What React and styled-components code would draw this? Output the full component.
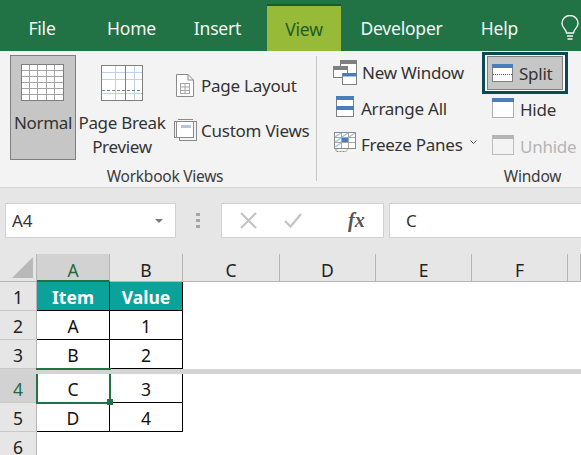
import React from "react";
import styled, { createGlobalStyle } from "styled-components";

const GlobalStyle = createGlobalStyle`
  html, body {
    margin: 0;
    padding: 0;
    background: #fff;
  }
  body {
    font-family: "Noto Sans", "Open Sans", sans-serif;
    overflow: hidden;
  }
`;

const Page = styled.div`
  width: 581px;
  height: 455px;
  overflow: hidden;
  display: flex;
  flex-direction: column;
`;

/* Tabs */
const TabBar = styled.div`
  height: 51px;
  flex: none;
  background: #217346;
  position: relative;
  display: flex;
  align-items: flex-end;
`;
const Tab = styled.div`
  width: ${(p) => p.$w}px;
  margin-right: ${(p) => p.$mr || 0}px;
  height: ${(p) => (p.$active ? 47 : 51)}px;
  box-sizing: border-box;
  display: flex;
  align-items: center;
  justify-content: center;
  padding-top: ${(p) => (p.$active ? 0 : 4)}px;
  font-size: 17.5px;
  letter-spacing: -0.2px;
  color: ${(p) => (p.$active ? "#1f5c2a" : "#f3f7f4")};
  background: ${(p) => (p.$active ? "#97ba38" : "transparent")};
  border-top: ${(p) => (p.$active ? "2px solid #155a30" : "none")};
`;
const BulbBox = styled.div`
  position: absolute;
  left: 561px;
  top: 15px;
`;

/* Ribbon */
const Ribbon = styled.div`
  height: 137px;
  flex: none;
  box-sizing: border-box;
  background: #f3f3f3;
  border-bottom: 1px solid #d6d6d6;
  display: flex;
`;
const Group = styled.div`
  width: ${(p) => p.$w}px;
  flex: none;
  box-sizing: border-box;
  display: flex;
  flex-direction: column;
  align-items: stretch;
`;
const GroupBody = styled.div`
  height: 115px;
  display: flex;
  padding: ${(p) => p.$pad};
  box-sizing: border-box;
`;
const GroupLabel = styled.div`
  text-align: center;
  font-size: 15.5px;
  letter-spacing: -0.25px;
  line-height: 20px;
  color: #3c3c3c;
  padding-left: ${(p) => p.$pl || 0}px;
`;
const Separator = styled.div`
  width: 1px;
  flex: none;
  margin: 5px 0 6px;
  background: #c6c6c6;
`;
const LargeButton = styled.div`
  width: ${(p) => p.$w}px;
  height: 105px;
  margin: 0 ${(p) => p.$mr || 0}px 0 ${(p) => p.$ml || 0}px;
  box-sizing: border-box;
  flex: none;
  display: flex;
  flex-direction: column;
  align-items: center;
  padding-top: ${(p) => p.$pt}px;
  font-size: 17px;
  letter-spacing: -0.3px;
  line-height: 24px;
  text-align: center;
  white-space: nowrap;
  color: #333;
  background: ${(p) => (p.$active ? "#c6c6c6" : "transparent")};
  border: 1px solid ${(p) => (p.$active ? "#7f7f7f" : "transparent")};
  svg {
    display: block;
    margin-bottom: ${(p) => p.$gap}px;
  }
`;
const SmallColumn = styled.div`
  width: ${(p) => p.$w}px;
  flex: none;
  display: flex;
  flex-direction: column;
  gap: ${(p) => p.$gap}px;
  padding-top: ${(p) => p.$pt}px;
`;
const SmallButton = styled.div`
  display: flex;
  align-items: center;
  gap: ${(p) => p.$gap || 7}px;
  height: ${(p) => p.$h || 26}px;
  padding-left: ${(p) => p.$pl || 0}px;
  padding-top: ${(p) => p.$textDown || 0}px;
  font-size: 17px;
  letter-spacing: -0.25px;
  white-space: nowrap;
  color: ${(p) => (p.$disabled ? "#b5b5b5" : "#333")};
  svg {
    flex: none;
    display: block;
    margin-bottom: ${(p) => (p.$iconUp || 0) * 2}px;
  }
`;
const SplitButton = styled.div`
  width: 86px;
  height: 42px;
  margin: -7px 0 -12px -10px;
  box-sizing: border-box;
  border: 3px solid #0b4a54;
  display: flex;
  padding: 1px 2px;
  background: #fff;
`;
const SplitInner = styled.div`
  flex: 1;
  display: flex;
  align-items: center;
  gap: 6px;
  padding-left: 4px;
  background: #c6c6c6;
  border: 1px solid #7f7f7f;
  font-size: 17px;
  letter-spacing: -0.25px;
  color: #333;
  svg {
    display: block;
  }
`;
const Chevron = styled.span`
  margin-left: 2px;
  display: inline-flex;
`;

/* Formula bar */
const FormulaBar = styled.div`
  height: 66px;
  flex: none;
  box-sizing: border-box;
  background: #e6e6e6;
  padding: 15px 0 0 5px;
  display: flex;
  align-items: flex-start;
`;
const NameBox = styled.div`
  width: 171px;
  height: 35px;
  box-sizing: border-box;
  background: #fff;
  border: 1px solid #d2d2d2;
  display: flex;
  align-items: center;
  justify-content: space-between;
  padding: 0 12px 0 6px;
  font-size: 17px;
  color: #333;
`;
const Caret = styled.span`
  width: 0;
  height: 0;
  border-left: 4px solid transparent;
  border-right: 4px solid transparent;
  border-top: 4px solid #7a7a7a;
`;
const Grip = styled.div`
  width: 4px;
  height: 15px;
  margin: 10px 21px 0 20px;
  background: repeating-linear-gradient(#a6a6a6 0 3px, transparent 3px 6px);
`;
const ActionBox = styled.div`
  width: 163px;
  height: 35px;
  margin-right: 5px;
  box-sizing: border-box;
  background: #fff;
  border: 1px solid #d2d2d2;
  display: flex;
  align-items: center;
  padding-left: 18px;
  gap: 27px;
`;
const Fx = styled.span`
  font-family: "Liberation Serif", serif;
  font-style: italic;
  font-weight: 700;
  font-size: 20px;
  color: #555;
  margin-left: 19px;
`;
const FormulaInput = styled.div`
  flex: 1;
  height: 35px;
  box-sizing: border-box;
  background: #fff;
  border: 1px solid #d2d2d2;
  border-right: none;
  display: flex;
  align-items: center;
  padding-left: 16px;
  font-size: 17px;
  color: #333;
`;

/* Sheet */
const Sheet = styled.div`
  flex: 1;
  background: #fff;
  display: grid;
  grid-template-columns: 37px 73px 73px 97px 96px 96px 96px 13px;
  grid-template-rows: 28px 29px 29px 29px 5px 29px 29px 29px;
  position: relative;
  font-size: 17.5px;
  color: #111;
`;
const Corner = styled.div`
  background: #e6e6e6;
  border-right: 1px solid #b5b5b5;
  border-bottom: 1px solid #b5b5b5;
  box-sizing: border-box;
  position: relative;
  &::after {
    content: "";
    position: absolute;
    right: 3px;
    bottom: 3px;
    border-style: solid;
    border-width: 0 0 21px 21px;
    border-color: transparent transparent #b9b9b9 transparent;
  }
`;
const ColHead = styled.div`
  box-sizing: border-box;
  background: ${(p) => (p.$selected ? "#d2d2d2" : "#e6e6e6")};
  border-right: 1px solid #b5b5b5;
  border-bottom: ${(p) => (p.$selected ? "2px solid #217346" : "1px solid #b5b5b5")};
  color: ${(p) => (p.$selected ? "#1f6b40" : "#222")};
  display: flex;
  align-items: flex-end;
  justify-content: center;
  line-height: ${(p) => (p.$selected ? 20 : 22)}px;
`;
const RowHead = styled.div`
  grid-column: 1;
  box-sizing: border-box;
  padding-top: 1px;
  background: ${(p) => (p.$selected ? "#d2d2d2" : "#e6e6e6")};
  border-right: 1px solid #b5b5b5;
  border-bottom: 1px solid #c9c9c9;
  color: ${(p) => (p.$selected ? "#1f6b40" : "#222")};
  display: flex;
  align-items: center;
  justify-content: center;
`;
const Cell = styled.div`
  box-sizing: border-box;
  padding-top: ${(p) => (p.$head ? 2 : 1)}px;
  display: flex;
  align-items: center;
  justify-content: center;
  border-right: 1px solid #000;
  border-bottom: 1px solid #000;
  background: ${(p) => (p.$head ? "#0ca29c" : "#fff")};
  color: ${(p) => (p.$head ? "#fff" : "#111")};
  font-weight: ${(p) => (p.$head ? 700 : 400)};
`;
const Blank = styled.div`
  grid-column: 4 / -1;
`;
const SplitBar = styled.div`
  grid-column: 1 / -1;
  background: #d4d4d4;
`;
const ActiveCell = styled.div`
  position: absolute;
  left: 36px;
  top: 120px;
  width: 75px;
  height: 30px;
  box-sizing: border-box;
  border: 2px solid #217346;
  border-top: none;
  &::before {
    content: "";
    position: absolute;
    left: -2px;
    right: -2px;
    top: -6px;
    height: 2px;
    background: #217346;
  }
  &::after {
    content: "";
    position: absolute;
    right: -4px;
    bottom: -3px;
    width: 6px;
    height: 6px;
    box-sizing: border-box;
    background: #217346;
  }
`;

/* Icons */
const NormalIcon = () => (
  <svg width="44" height="38" viewBox="0 0 44 38">
    <rect x="0.5" y="0.5" width="42" height="36" fill="#fff" stroke="#7f7f7f" />
    {[6.5, 12.5, 18.5, 24.5, 30.5].map((y) => (
      <path key={y} d={`M1 ${y}H42`} stroke="#a3a3a3" />
    ))}
    {[8.5, 16.5, 25.5, 33.5].map((x) => (
      <path key={x} d={`M${x} 1V36`} stroke="#a3a3a3" />
    ))}
  </svg>
);
const BreakIcon = () => (
  <svg width="42" height="36" viewBox="0 0 42 36">
    <rect x="0.5" y="0.5" width="41" height="35" fill="#fff" stroke="#7f7f7f" />
    {[7.5, 14.5, 28.5].map((y) => (
      <path key={y} d={`M1 ${y}H41`} stroke="#bcd2e8" />
    ))}
    {[14.5, 33.5].map((x) => (
      <path key={x} d={`M${x} 1V35`} stroke="#bcd2e8" />
    ))}
    <path d="M24.5 1V35" stroke="#7f7f7f" />
    <path d="M1 25.5H41" stroke="#7f7f7f" strokeDasharray="3 2" />
  </svg>
);
const PageLayoutIcon = () => (
  <svg width="18" height="23" viewBox="0 0 18 23">
    <path d="M.5.5H12L17.5 6V22.5H.5Z" fill="#fff" stroke="#8a8a8a" />
    <path d="M12 .5V6H17.5" fill="none" stroke="#8a8a8a" />
    <path d="M4 9.5H14M4 13H14M4 16.5H14M4 19.5H14M4.5 9V20M9 9V20M13.5 9V20" stroke="#a6a6a6" />
  </svg>
);
const CustomViewsIcon = () => (
  <svg width="23" height="22" viewBox="0 0 23 22">
    <rect x="5.5" y="2.5" width="17" height="19" fill="none" stroke="#8a8a8a" />
    <rect x="2.5" y="2.5" width="17" height="16" fill="#fff" stroke="#8a8a8a" />
    <rect x="7" y="6" width="10" height="3" fill="#b5c7de" />
    <path d="M.5 2V19M0 2.5H2M0 18.5H2M4 .5H19" stroke="#8a8a8a" />
  </svg>
);
const NewWindowIcon = () => (
  <svg width="24" height="25" viewBox="0 0 24 25">
    <rect x="7.5" y=".5" width="16" height="13" fill="#fff" stroke="#7f7f7f" />
    <rect x="8" y="1" width="15" height="3" fill="#7f7f7f" />
    <rect x=".5" y="6.5" width="14" height="11" fill="#fff" stroke="#7f7f7f" />
    <rect x="1" y="7" width="13" height="3" fill="#7f7f7f" />
    <rect x="9.5" y="13.5" width="14" height="11" fill="#fff" stroke="#7f7f7f" />
    <rect x="10" y="13" width="13.5" height="3.5" fill="#4a7ebb" />
  </svg>
);
const ArrangeIcon = () => (
  <svg width="18" height="21" viewBox="0 0 18 21">
    <rect x=".5" y=".5" width="17" height="20" fill="#fff" stroke="#7f7f7f" />
    <rect x="0" y="0" width="18" height="4" fill="#4a7ebb" />
    <rect x="0" y="10" width="18" height="4" fill="#4a7ebb" />
  </svg>
);
const FreezeIcon = () => (
  <svg width="22" height="20" viewBox="0 0 22 20">
    <rect x=".5" y=".5" width="21" height="16" fill="#fff" stroke="#8a8a8a" />
    <path d="M1 5.5H21M1 10.5H21M7.5 1V16M14.500 1V16" stroke="#a6a6a6" />
    <path d="M1 5L7 1M8 5L14 1M1 10L7 6M1 15L7 11M15 5L21 1" stroke="#9fc0de" strokeWidth="1.5" />
    <rect x="8" y="6" width="6" height="4" fill="#4a7ebb" />
    <path d="M2 17V19.5H12L14 17" fill="none" stroke="#8a8a8a" strokeDasharray="2 1" />
  </svg>
);
const SplitIcon = () => (
  <svg width="21" height="18" viewBox="0 0 21 18">
    <rect x=".5" y=".5" width="20" height="17" fill="#fff" stroke="#7f7f7f" />
    <rect x="0" y="0" width="21" height="4" fill="#4a7ebb" />
    <path d="M1 10.500H20" stroke="#2e75b6" strokeDasharray="1 1" />
  </svg>
);
const HideIcon = () => (
  <svg width="22" height="20" viewBox="0 0 22 20">
    <rect x=".5" y=".5" width="21" height="19" fill="#fff" stroke="#666" strokeDasharray="1 1" />
    <rect x="0" y="0" width="22" height="4" fill="#4a7ebb" />
  </svg>
);
const UnhideIcon = () => (
  <svg width="22" height="20" viewBox="0 0 22 20">
    <rect x=".5" y=".5" width="21" height="19" fill="#f3f3f3" stroke="#bdbdbd" />
    <rect x="0" y="0" width="22" height="4" fill="#b5b5b5" />
  </svg>
);
const BulbIcon = () => (
  <svg width="18" height="26" viewBox="0 0 18 26" fill="none" stroke="#f4f7f5" strokeWidth="1.4">
    <path d="M5.5 18C5 14 1 12.500 1 8.500A8 8 0 0 1 17 8.500C17 12.500 13 14 12.500 18Z" />
    <path d="M6 21H12M6.500 24H11.500" />
  </svg>
);
const ChevronIcon = () => (
  <svg width="7" height="5" viewBox="0 0 7 5" fill="none" stroke="#555">
    <path d="M.5 .5L3.500 3.500L6.500 .5" />
  </svg>
);
const CrossIcon = () => (
  <svg width="17" height="17" viewBox="0 0 17 17" stroke="#c4c4c4" strokeWidth="2.200">
    <path d="M1 1L16 16M16 1L1 16" />
  </svg>
);
const CheckIcon = () => (
  <svg width="18" height="15" viewBox="0 0 18 15" fill="none" stroke="#c4c4c4" strokeWidth="2.200">
    <path d="M1 8L6.500 13.500L17 1" />
  </svg>
);

const columns = ["B", "C", "D", "E", "F", ""];
const rows = [
  { n: 1, a: "Item", b: "Value", head: true },
  { n: 2, a: "A", b: "1" },
  { n: 3, a: "B", b: "2" },
  { n: 4, a: "C", b: "3", selected: true },
  { n: 5, a: "D", b: "4" },
];

export default function App() {
  return (
    <Page>
      <GlobalStyle />
      <TabBar>
        <Tab $w={84}>File</Tab>
        <Tab $w={95}>Home</Tab>
        <Tab $w={77} $mr={11}>Insert</Tab>
        <Tab $w={74} $active>View</Tab>
        <Tab $w={121}>Developer</Tab>
        <Tab $w={75}>Help</Tab>
        <BulbBox><BulbIcon /></BulbBox>
      </TabBar>

      <Ribbon>
        <Group $w={316}>
          <GroupBody $pad="4px 0 0 10px">
            <LargeButton $w={66} $pt={8} $gap={9} $active>
              <NormalIcon />
              Normal
            </LargeButton>
            <LargeButton $w={86} $ml={3} $mr={9} $pt={9} $gap={10}>
              <BreakIcon />
              Page Break
              <br />
              Preview
            </LargeButton>
            <SmallColumn $pt={17} $gap={19}>
              <SmallButton $pl={2} $gap={7}><PageLayoutIcon />Page Layout</SmallButton>
              <SmallButton $gap={4}><CustomViewsIcon />Custom Views</SmallButton>
            </SmallColumn>
          </GroupBody>
          <GroupLabel $pl={14}>Workbook Views</GroupLabel>
        </Group>
        <Separator />
        <Group $w={264}>
          <GroupBody $pad="8px 0 0 16px">
            <SmallColumn $w={159} $pt={0} $gap={10}>
              <SmallButton $gap={5}><NewWindowIcon />New Window</SmallButton>
              <SmallButton $pl={3} $gap={7} $iconUp={2}><ArrangeIcon />Arrange All</SmallButton>
              <SmallButton $pl={1} $gap={5} $iconUp={2}><FreezeIcon />Freeze Panes <Chevron><ChevronIcon /></Chevron></SmallButton>
            </SmallColumn>
            <SmallColumn $pt={0} $gap={15}>
              <SplitButton>
                <SplitInner><SplitIcon />Split</SplitInner>
              </SplitButton>
              <SmallButton $h={20} $gap={6} $textDown={2} $iconUp={1}><HideIcon />Hide</SmallButton>
              <SmallButton $h={20} $gap={6} $textDown={2} $iconUp={1} $disabled><UnhideIcon />Unhide</SmallButton>
            </SmallColumn>
          </GroupBody>
          <GroupLabel $pl={167}>Window</GroupLabel>
        </Group>
      </Ribbon>

      <FormulaBar>
        <NameBox>A4<Caret /></NameBox>
        <Grip />
        <ActionBox>
          <CrossIcon />
          <CheckIcon />
          <Fx>fx</Fx>
        </ActionBox>
        <FormulaInput>C</FormulaInput>
      </FormulaBar>

      <Sheet>
        <Corner />
        <ColHead $selected>A</ColHead>
        {columns.map((c, i) => (
          <ColHead key={i}>{c}</ColHead>
        ))}
        {rows.map((r) => (
          <React.Fragment key={r.n}>
            {r.n === 4 && <SplitBar />}
            <RowHead $selected={r.selected}>{r.n}</RowHead>
            <Cell $head={r.head}>{r.a}</Cell>
            <Cell $head={r.head}>{r.b}</Cell>
            <Blank />
          </React.Fragment>
        ))}
        <RowHead>6</RowHead>
        <ActiveCell />
      </Sheet>
    </Page>
  );
}
